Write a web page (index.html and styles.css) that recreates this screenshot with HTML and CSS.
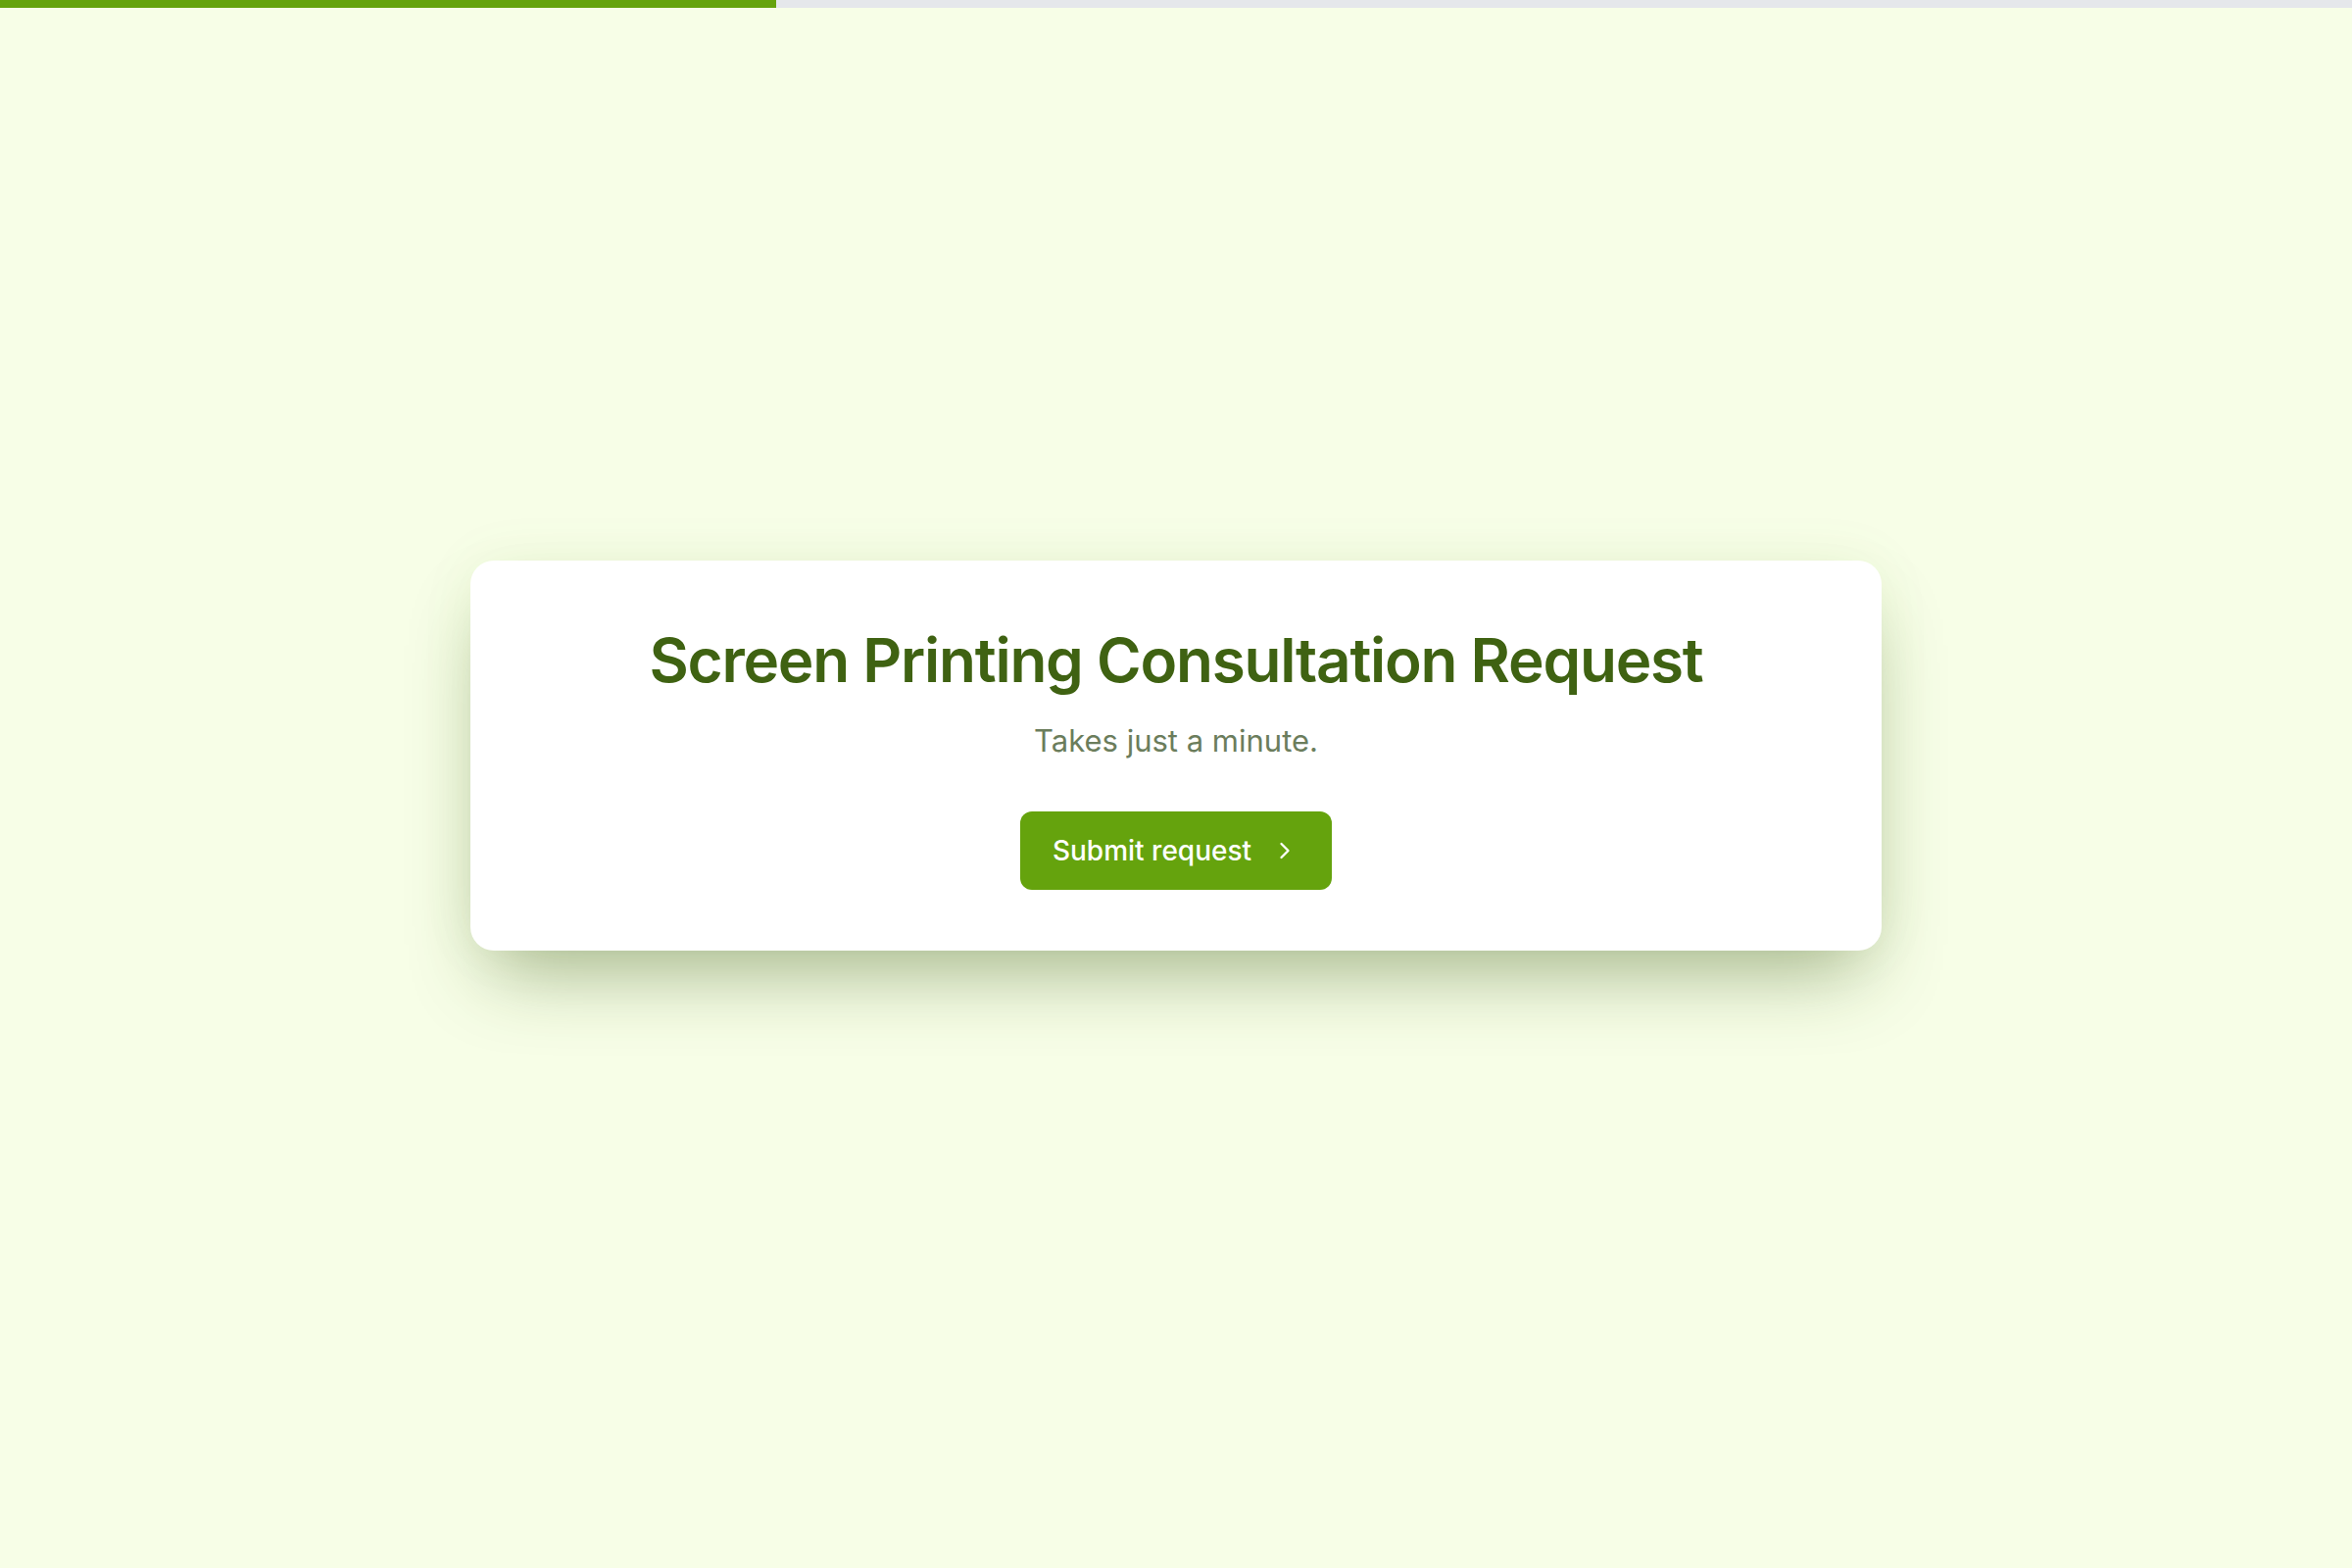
FILE: index.html
```html
<!DOCTYPE html>
<html lang="en">
<head>
  <meta charset="UTF-8">
  <title>Screen Printing Consultation Request</title>
  <link rel="stylesheet" href="styles.css">
</head>
<body>
  <div class="progress">
    <div class="progress-fill" style="width: 33%"></div>
  </div>

  <main class="page">
    <div class="card">
      <h1>Screen Printing Consultation Request</h1>
      <p class="subtitle">Takes just a minute.</p>
      <button class="btn" type="button">
        Submit request
        <svg class="chevron" viewBox="0 0 24 24" fill="none" stroke="currentColor" stroke-width="2" stroke-linecap="round" stroke-linejoin="round">
          <path d="m9 18 6-6-6-6"/>
        </svg>
      </button>
    </div>
  </main>
</body>
</html>
```

FILE: styles.css
```css
* {
  box-sizing: border-box;
}
body {
  margin: 0;
  min-height: 100vh;
  font-family: Inter, 'Noto Sans', sans-serif;
  background: #f7fee7;
  color: #3f6212;
  display: flex;
  flex-direction: column;
}
.progress {
  height: 8px;
  background: #e5e7eb;
}
.progress-fill {
  height: 100%;
  background: #65a30d;
}
.page {
  flex: 1;
  display: flex;
  align-items: center;
  justify-content: center;
  padding: 24px 24px 90px;
}
.card {
  width: 1440px;
  background: white;
  border-radius: 24px;
  padding: 65px 48px 62px;
  text-align: center;
  box-shadow: 0 40px 80px -20px rgba(54, 83, 20, 0.42), 0 0 60px rgba(101, 163, 13, 0.06);
}
h1 {
  margin: 0;
  font-size: 62px;
  line-height: 1.2;
  font-weight: 600;
  letter-spacing: -0.02em;
  color: #3f6212;
}
.subtitle {
  margin: 22px 0 0;
  font-size: 31px;
  line-height: 1.5;
  color: #6b7d5c;
}
.btn {
  margin-top: 48px;
  display: inline-flex;
  align-items: center;
  gap: 20px;
  height: 80px;
  padding: 0 34px 0 33px;
  background: #65a30d;
  color: white;
  font-family: inherit;
  font-size: 28px;
  font-weight: 500;
  border: none;
  border-radius: 12px;
  cursor: pointer;
}
.btn:hover {
  background: #4d7c0f;
}
.chevron {
  width: 28px;
  height: 28px;
}
```
